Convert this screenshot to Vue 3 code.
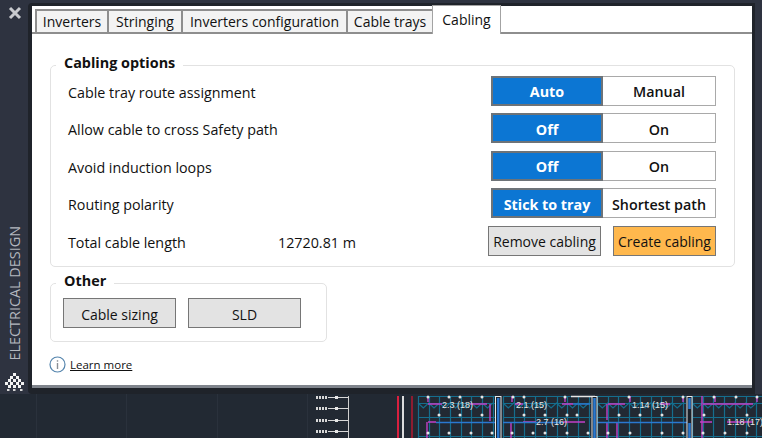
<script setup>
const tabs = [
  { label: 'Inverters', width: 72 },
  { label: 'Stringing', width: 74 },
  { label: 'Inverters configuration', width: 165 },
  { label: 'Cable trays', width: 86 },
  { label: 'Cabling', width: 69, active: true }
]
const toggles = [
  { label: 'Cable tray route assignment', on: 'Auto', off: 'Manual' },
  { label: 'Allow cable to cross Safety path', on: 'Off', off: 'On' },
  { label: 'Avoid induction loops', on: 'Off', off: 'On' },
  { label: 'Routing polarity', on: 'Stick to tray', off: 'Shortest path' }
]
const logoCells = [
  [8, 0], [5, 3], [11, 3], [3, 6], [8, 6], [13, 6], [0, 9], [5, 9], [11, 9], [16, 9], [3, 12], [8, 12], [13, 12]
]
const logoDots = [[2, 16], [8, 16], [15, 16]]

const blocks = [
  [418, 495],
  [503, 591],
  [597, 686],
  [692, 762]
]
const verticals = blocks.flatMap(([a, b]) => {
  const out = []
  for (let x = a; x <= b; x += 10.7) out.push(Math.round(x) + 0.5)
  return out
})
const zigzag = blocks.map(([a, b]) => {
  let d = `M${a} 403`
  for (let x = a; x + 10.7 <= b; x += 10.7) d += `L${(x + 5.3).toFixed(1)} 408L${(x + 10.7).toFixed(1)} 403`
  return d
}).join('')
const rails = [396.5, 403.5, 417.5, 436.5]
  .flatMap(y => blocks.map(([a, b]) => `M${a} ${y}H${b}`))
  .join('')
const dotRows = [
  { y: 397, xs: [428, 449, 460, 482, 513, 524, 565, 629, 683, 714, 736, 757] },
  { y: 415, xs: [439, 460, 482, 524, 545, 567, 577, 619, 640, 662, 704, 747] },
  { y: 433, xs: [428, 449, 471, 492, 512, 533, 545, 567, 588, 608, 630, 662, 683, 703, 725, 747] }
]
const dots = dotRows.flatMap(r => r.xs.map(x => ({ x, y: r.y })))
const labels = [
  { x: 442, y: 408, t: '2.3 (18)' },
  { x: 516, y: 408, t: '2.1 (15)' },
  { x: 536, y: 425, t: '2.7 (16)' },
  { x: 632, y: 408, t: '1.14 (15)' },
  { x: 727, y: 425, t: '1.18 (17)' }
]
const stubs = [397, 408, 420, 431]
</script>

<template>
  <div class="screen">
    <div class="workspace">
      <aside class="rail">
        <svg class="close" width="14" height="14" viewBox="0 0 14 14">
          <path d="M2 2 L12 12 M12 2 L2 12" stroke="#c9cbcf" stroke-width="3" />
        </svg>
        <span class="rail-title">ELECTRICAL DESIGN</span>
        <svg class="logo" width="20" height="20" viewBox="0 0 20 20">
          <rect v-for="(c, i) in logoCells" :key="i" :x="c[0]" :y="c[1]" width="3" height="3" fill="#f2f2f2" />
          <rect v-for="(c, i) in logoDots" :key="'d' + i" :x="c[0]" :y="c[1]" width="2.5" height="2" fill="#d8d8d8" />
        </svg>
      </aside>
      <main class="window">
        <nav class="tabs">
          <div
            v-for="tab in tabs"
            :key="tab.label"
            class="tab"
            :class="{ active: tab.active }"
            :style="{ width: tab.width + 'px' }"
          >{{ tab.label }}</div>
        </nav>
        <div class="content">
          <fieldset class="group options">
            <legend>Cabling options</legend>
            <div class="rows">
              <div v-for="row in toggles" :key="row.label" class="row">
                <span class="label">{{ row.label }}</span>
                <div class="segment">
                  <span class="seg on">{{ row.on }}</span>
                  <span class="seg off">{{ row.off }}</span>
                </div>
              </div>
              <div class="row total">
                <span class="label short">Total cable length</span>
                <span class="value">12720.81 m</span>
                <div class="actions">
                  <button class="btn remove">Remove cabling</button>
                  <button class="btn create">Create cabling</button>
                </div>
              </div>
            </div>
          </fieldset>
          <fieldset class="group other">
            <legend>Other</legend>
            <div class="other-row">
              <button class="btn wide">Cable sizing</button>
              <button class="btn wide">SLD</button>
            </div>
          </fieldset>
          <div class="learn">
            <svg width="17" height="17" viewBox="0 0 17 17">
              <circle cx="8.5" cy="8.5" r="7.5" fill="none" stroke="#5585ad" stroke-width="1.2" />
              <rect x="7.8" y="7" width="1.4" height="6" fill="#8a8f96" />
              <rect x="7.8" y="4.2" width="1.4" height="1.5" fill="#8a8f96" />
            </svg>
            <a class="link">Learn more</a>
          </div>
        </div>
      </main>
    </div>
    <svg class="cad" width="762" height="44" viewBox="0 394 762 44">
      <path d="M36.5 394V438M126.5 394V438M217.5 394V438M307.5 394V438" stroke="#2a313c" />
      <path d="M348.5 396V438" stroke="#d0d0d0" />
      <path v-for="y in stubs" :key="y" :d="`M328 ${y}.5H348`" stroke="#d8d8d8" />
      <path v-for="y in stubs" :key="'t' + y" :d="`M316 ${y}.5H327`" stroke="#d8d8d8" stroke-width="3" stroke-dasharray="2 1" />
      <rect v-for="y in stubs" :key="'b' + y" x="335" :y="y - 1" width="3" height="3" fill="#e6e6e6" />
      <rect x="397" y="396" width="2" height="42" fill="#d8203f" />
      <rect x="402" y="396" width="2" height="42" fill="#dcdcdc" />
      <rect x="411" y="396" width="2" height="42" fill="#8e1c30" />
      <g fill="none" stroke="#156e8e" stroke-width="1.2">
        <path v-for="x in verticals" :key="x" :d="`M${x} 396V438`" />
        <path :d="rails" />
        <path :d="zigzag" />
      </g>
      <path
        d="M428 404H442M470 404H487M490 404V421M428 422H436M427 422V438M428 396V402M515 404H523M512 396V402M511 422V438M523 422H536M563 422H585M565 396V402M562 404H573M607 404V420M607 422V438M617 422V438M608 404H625M660 404H670M630 396V402M683 396V402M702 396V438M703 404H753M727 422H753M700 422H712M715 396V402M757 396V402"
        fill="none"
        stroke="#c23fc8"
        stroke-width="1.4"
      />
      <path d="M436 422.5H495M503 422.5H563M573 404H590M597 422.5H688" stroke="#2a78d0" stroke-width="1.4" />
      <path d="M571 396.5H595" stroke="#e6e6e6" stroke-width="1.5" />
      <g fill="#1a2029" stroke="#e8e8e8" stroke-width="1">
        <rect x="495.5" y="396.5" width="5.5" height="42" />
        <rect x="592" y="396.5" width="5" height="42" />
        <rect x="687" y="396.5" width="5" height="42" />
      </g>
      <path d="M498.2 398V438M594.5 398V438M689.5 398V409M689.5 423V438" stroke="#2a78d0" stroke-width="2.5" />
      <circle v-for="(d, i) in dots" :key="i" :cx="d.x" :cy="d.y" r="1.5" fill="#e4e4e4" />
      <text v-for="l in labels" :key="l.t" :x="l.x" :y="l.y" class="cad-label">{{ l.t }}</text>
    </svg>
  </div>
</template>

<style scoped>
.screen {
  width: 762px;
  height: 438px;
  overflow: hidden;
  display: flex;
  flex-direction: column;
  background: #222933;
  font-family: "Open Sans", "Noto Sans", sans-serif;
  font-size: 14.3px;
  color: #111;
}
.workspace {
  height: 394px;
  display: flex;
  background: #2e3340;
  flex-shrink: 0;
}
.rail {
  width: 28px;
  padding-left: 1px;
  box-sizing: border-box;
  display: flex;
  flex-direction: column;
  align-items: center;
}
.close {
  margin-top: 6px;
  margin-left: 1px;
}
.rail-title {
  margin-top: auto;
  writing-mode: vertical-rl;
  transform: rotate(180deg);
  color: #b4b8bf;
  font-size: 14.4px;
  line-height: 16px;
}
.logo {
  display: block;
  margin-top: 13px;
  margin-bottom: 1px;
}
.window {
  width: 727px;
  margin-top: 3px;
  border: solid #1f232a;
  border-width: 3px 3px 6px 4px;
  border-radius: 4px 0 0 4px;
  box-sizing: border-box;
  background: #fff;
  box-shadow: inset 0 -3px 0 #7f848c;
  display: flex;
  flex-direction: column;
}
.tabs {
  height: 26px;
  display: flex;
  align-items: flex-end;
  padding-left: 3px;
  border-bottom: 2px solid #8e8e8e;
}
.tab {
  height: 25px;
  box-sizing: border-box;
  margin-bottom: -2px;
  background: #f3f3f3;
  border: 2px solid #8e8e8e;
  border-right-width: 0;
  text-align: center;
  line-height: 22px;
  font-size: 14px;
}
.tab.active {
  height: 29px;
  margin-bottom: -2px;
  background: #fff;
  border: 1px solid #a3a3a3;
  border-bottom: 0;
  line-height: 28px;
}
.content {
  flex: 1;
  padding: 0 17px 0 18px;
  display: flex;
  flex-direction: column;
}
.group {
  margin: 0;
  padding: 0;
  min-width: 0;
  border: 1px solid #e2e2e2;
  border-radius: 5px;
}
legend {
  margin-left: 5px;
  padding: 0 8px 4px;
  font-weight: 700;
  line-height: 20px;
  font-size: 14.4px;
}
.options {
  margin-top: 19px;
  height: 214px;
  box-sizing: border-box;
}
.rows {
  margin-top: -1.1px;
  padding: 0 18px 0 17px;
  display: flex;
  flex-direction: column;
  gap: 7.5px;
}
.row {
  height: 30px;
  display: flex;
  align-items: center;
}
.label {
  flex: 1;
  padding-top: 3px;
}
.label.short {
  flex: 0 0 210px;
}
.value {
  flex: 1;
  padding-top: 3px;
}
.segment {
  display: flex;
}
.seg {
  width: 113px;
  height: 30px;
  box-sizing: border-box;
  padding-top: 2px;
  display: flex;
  align-items: center;
  justify-content: center;
  font-weight: 600;
}
.seg.on {
  background: #0c76d3;
  color: #fff;
  font-weight: 700;
  border: 2px solid #6d7378;
  width: 112px;
}
.seg.off {
  background: #fff;
  border: 1px solid #a9a9a9;
  border-left: 0;
}
.actions {
  display: flex;
  gap: 12px;
}
.btn {
  height: 30px;
  padding: 2px 0 0;
  box-sizing: border-box;
  border: 1px solid #767676;
  background: #e3e3e3;
  font: inherit;
  font-size: 14px;
  color: #111;
}
.btn.remove,
.btn.wide {
  width: 113px;
}
.btn.create {
  width: 103px;
  background: #ffb84d;
}
.other {
  margin-top: 4px;
  width: 277px;
  height: 71px;
  box-sizing: border-box;
}
.other-row {
  display: flex;
  gap: 12px;
  padding: 3px 0 0 12px;
}
.learn {
  margin-top: 14px;
  margin-left: -1px;
  display: flex;
  align-items: center;
  gap: 4px;
}
.link {
  text-decoration: underline;
  font-size: 11.5px;
  color: #111;
}
.cad {
  display: block;
  flex-shrink: 0;
}
.cad-label {
  font-family: "Liberation Sans", sans-serif;
  font-size: 9px;
  fill: #e6e6e6;
}
</style>
